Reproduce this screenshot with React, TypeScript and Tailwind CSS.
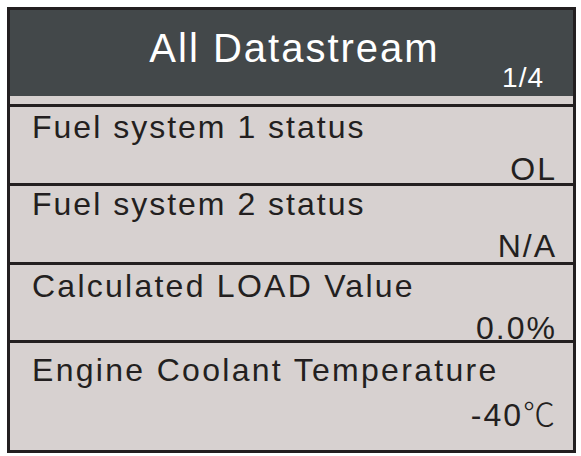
import React from 'react';

const rows = [
  { label: 'Fuel system 1 status', value: 'OL', h: 'h-[79px]', pt: 'pt-[4px]', track: 'tracking-[2px]' },
  { label: 'Fuel system 2 status', value: 'N/A', h: 'h-[79px]', pt: 'pt-[2px]', track: 'tracking-[2px]' },
  { label: 'Calculated LOAD Value', value: '0.0%', h: 'h-[78px]', pt: 'pt-[5px]', track: 'tracking-[2.25px]' },
  { label: 'Engine Coolant Temperature', value: '-40', unit: '℃', h: 'h-[110px]', pt: 'pt-[11px]', track: 'tracking-[2.3px]' },
];

const App = () => {
  return (
    <div className="w-[581px] h-[456px] bg-white pt-[7px] pl-[7px]" style={{ fontFamily: '"Liberation Sans", Arial, sans-serif' }}>
      <div className="w-[569px] h-[446px] border-[3px] border-[#231f20] bg-[#d7d1d0] flex flex-col">
        {/* Header */}
        <div className="h-[86px] bg-[#43484a] text-white flex flex-col">
          <div className="pt-[18px] pl-[6px] text-center text-[40px] leading-[40px] tracking-[2px]">All Datastream</div>
          <div className="-mt-[4px] pr-[29px] text-right text-[28px] leading-[28px] tracking-[1px]">1/4</div>
        </div>
        <div className="h-[8px]" />

        {rows.map((row, i) => (
          <div key={i} className={`border-t-[3px] border-[#231f20] ${row.h} ${row.pt} pl-[22px] pr-[16px] text-[#231f20] flex flex-col`}>
            <div className={`text-[32px] leading-[32px] ${row.track}`}>{row.label}</div>
            <div className="mt-[10px] text-right text-[32px] leading-[32px] tracking-[2px]">
              {row.value}
              {row.unit && (
                <span className="font-light" style={{ fontFamily: '"Noto Sans CJK SC", sans-serif' }}>{row.unit}</span>
              )}
            </div>
          </div>
        ))}
      </div>
    </div>
  );
};

export default App;
